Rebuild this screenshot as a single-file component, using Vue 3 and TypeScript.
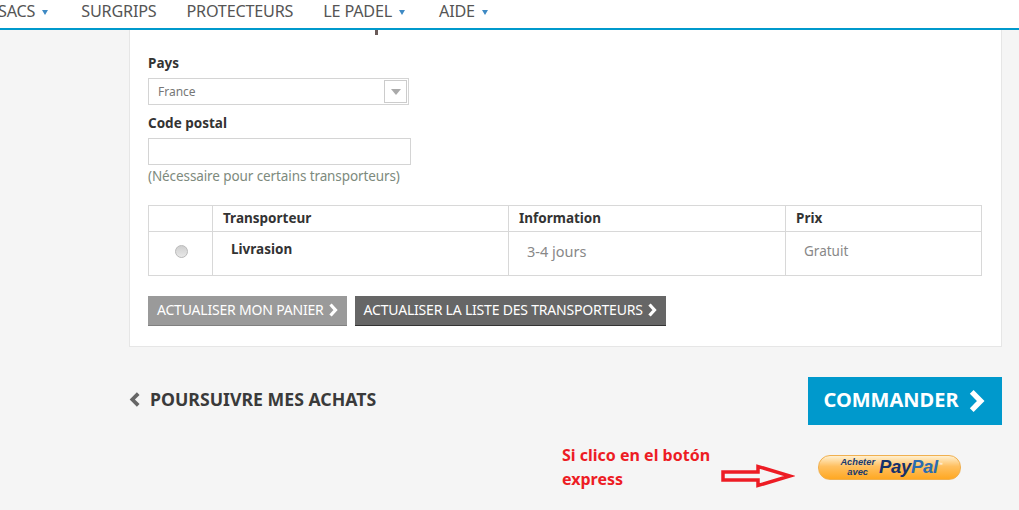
<script setup lang="ts">
const navItems: { label: string; caret: boolean }[] = [
  { label: 'SACS', caret: true },
  { label: 'SURGRIPS', caret: false },
  { label: 'PROTECTEURS', caret: false },
  { label: 'LE PADEL', caret: true },
  { label: 'AIDE', caret: true },
]
</script>

<template>
  <div class="page">
    <nav class="nav">
      <span v-for="item in navItems" :key="item.label" class="nav-item" :class="{ 'has-caret': item.caret }">
        {{ item.label }}<i v-if="item.caret" class="caret"></i>
      </span>
    </nav>

    <section class="card">
      <div class="stub"></div>
      <label class="label first">Pays</label>
      <div class="select">
        <span>France</span>
        <span class="select-btn"><i class="select-caret"></i></span>
      </div>
      <label class="label second">Code postal</label>
      <div class="input"></div>
      <p class="hint">(Nécessaire pour certains transporteurs)</p>

      <table class="table">
        <colgroup>
          <col class="c1" /><col class="c2" /><col class="c3" /><col class="c4" />
        </colgroup>
        <thead>
          <tr>
            <th></th>
            <th>Transporteur</th>
            <th>Information</th>
            <th>Prix</th>
          </tr>
        </thead>
        <tbody>
          <tr>
            <td class="radio-cell"><span class="radio"></span></td>
            <td class="name">Livrasion</td>
            <td class="muted days">3-4 jours</td>
            <td class="muted">Gratuit</td>
          </tr>
        </tbody>
      </table>

      <div class="buttons">
        <span class="btn light">ACTUALISER MON PANIER
          <svg class="chev" viewBox="0 0 9 14"><path d="M2 1.500 7 7l-5 5.500" /></svg>
        </span>
        <span class="btn dark">ACTUALISER LA LISTE DES TRANSPORTEURS
          <svg class="chev" viewBox="0 0 9 14"><path d="M2 1.500 7 7l-5 5.500" /></svg>
        </span>
      </div>
    </section>

    <div class="actions">
      <span class="back">
        <svg class="back-chev" viewBox="0 0 11 14"><path d="M8.500 1.500 3 7l5.500 5.500" /></svg>
        POURSUIVRE MES ACHATS
      </span>
      <span class="order">COMMANDER
        <svg class="order-chev" viewBox="0 0 16 22"><path d="M3.500 2.500 12 11l-8.500 8.500" /></svg>
      </span>
    </div>

    <div class="express">
      <p class="note">Si clico en el botón<br />express</p>
      <svg class="arrow" width="74" height="26" viewBox="0 0 74 26">
        <path d="M2 9h35V3.500L69 13 37 22.500V17H2z" fill="none" stroke="#ed1c24" stroke-width="3.500" />
      </svg>
      <div class="paypal">
        <span class="pp-small">Acheter<br />avec</span>
        <span class="pp-logo"><b class="pay">Pay</b><b class="pal">Pal</b><sup>™</sup></span>
      </div>
    </div>
  </div>
</template>

<style>
html, body { margin: 0; background: #f5f5f5; }
</style>

<style scoped>
.page {
  width: 1019px;
  height: 510px;
  overflow: hidden;
  background: #f5f5f5;
  font-family: "Noto Sans", "Open Sans", sans-serif;
  color: #333;
}
.nav {
  display: flex;
  box-sizing: border-box;
  height: 30px;
  padding-bottom: 7px;
  background: #fff;
  border-bottom: 2px solid #0099cc;
  align-items: center;
  margin-left: -2px;
  font-size: 16.200px;
  color: #555;
  letter-spacing: -0.2px;
}
.nav-item { white-space: nowrap; margin-right: 30px; }
.nav-item.has-caret { margin-right: 33px; }
.nav-item.has-caret:nth-child(4) { margin-right: 34px; }
.caret {
  display: inline-block;
  margin-left: 7px;
  vertical-align: 2px;
  border-left: 3.500px solid transparent;
  border-right: 3.500px solid transparent;
  border-top: 5px solid #3f8ac4;
}
.card {
  width: 873px;
  height: 317px;
  box-sizing: border-box;
  margin-left: 129px;
  padding: 0 19px 0 18px;
  background: #fff;
  border: 1px solid #e6e6e6;
  border-top: 0;
}
.stub { width: 3px; height: 5px; margin-left: 227px; background: #6a5a58; }
.label {
  display: block;
  font-size: 13.500px;
  font-weight: 700;
  line-height: 18px;
  color: #333;
}
.first { margin-top: 19px; }
.second { margin-top: 9px; }
.select {
  display: flex;
  justify-content: space-between;
  align-items: center;
  box-sizing: border-box;
  width: 261px;
  height: 27px;
  margin-top: 6px;
  padding: 1px 1px 1px 9px;
  border: 1px solid #d4d4d4;
  font-size: 12px;
  color: #777;
}
.select-btn {
  display: flex;
  align-items: center;
  justify-content: center;
  box-sizing: border-box;
  width: 23px;
  height: 23px;
  border: 1px solid #ccc;
}
.select-caret {
  border-left: 5px solid transparent;
  border-right: 5px solid transparent;
  border-top: 6px solid #aaa;
}
.input {
  box-sizing: border-box;
  width: 263px;
  height: 27px;
  margin-top: 6px;
  background: #fff;
  border: 1px solid #d4d4d4;
}
.hint {
  margin: 1px 0 0;
  font-size: 13.500px;
  line-height: 20px;
  color: #7d8a7d;
  letter-spacing: -0.1px;
}
.table {
  width: 834px;
  margin-top: 19px;
  border-collapse: collapse;
  table-layout: fixed;
}
.c1 { width: 64px; }
.c2 { width: 296px; }
.c3 { width: 277px; }
.table th, .table td { border: 1px solid #d8d8d8; padding: 0; box-sizing: border-box; }
.table th {
  height: 26px;
  padding: 0 0 2px 10px;
  font-size: 13.500px;
  font-weight: 700;
  text-align: left;
  color: #333;
}
.table td { height: 44px; font-size: 13.500px; }
.radio {
  display: block;
  box-sizing: border-box;
  width: 13px;
  height: 13px;
  margin: 0 0 5px 26px;
  border: 1px solid #bbb;
  border-radius: 50%;
  background: linear-gradient(#cfcfcf, #e8e8e8);
}
.table .name {
  padding: 0 0 9px 18px;
  font-weight: 700;
  color: #333;
}
.table .muted { padding: 0 0 5px 18px; color: #888; }
.table .days { font-size: 14.500px; }
.buttons { display: flex; gap: 8px; margin-top: 20px; }
.btn {
  display: flex;
  align-items: center;
  gap: 4px;
  box-sizing: border-box;
  height: 30px;
  padding: 0 9px 2px;
  font-size: 14px;
  letter-spacing: -0.2px;
  color: #fff;
  white-space: nowrap;
}
.light { background: #9a9a9a; border-bottom: 1px solid #808080; }
.dark { background: #666; border-bottom: 1px solid #333; }
.chev { width: 10px; height: 14px; }
.chev path { fill: none; stroke: #fff; stroke-width: 3.200; }
.actions {
  display: flex;
  justify-content: space-between;
  align-items: center;
  width: 873px;
  height: 48px;
  margin: 30px 0 0 129px;
}
.back {
  display: flex;
  align-items: center;
  gap: 9px;
  padding-bottom: 4px;
  font-size: 17.700px;
  font-weight: 700;
  color: #3a3a3a;
}
.back-chev { width: 12px; height: 15px; margin-top: 1px; }
.back-chev path { fill: none; stroke: #666; stroke-width: 3.500; }
.order {
  display: flex;
  align-items: center;
  justify-content: center;
  gap: 9px;
  box-sizing: border-box;
  width: 194px;
  height: 48px;
  padding: 0 2px 4px 0;
  background: #0099cc;
  color: #fff;
  font-size: 20px;
  font-weight: 700;
}
.order-chev { width: 17px; height: 24px; margin-top: 4px; }
.order-chev path { fill: none; stroke: #fff; stroke-width: 5; }
.express {
  display: flex;
  align-items: flex-start;
  margin: 18px 0 0 562px;
}
.note {
  width: 159px;
  margin: 0;
  font-size: 16px;
  font-weight: 700;
  line-height: 24px;
  color: #ed1c24;
}
.arrow { margin-top: 20px; }
.paypal {
  display: flex;
  align-items: center;
  justify-content: center;
  gap: 4px;
  box-sizing: border-box;
  width: 143px;
  height: 25px;
  margin: 12px 0 0 23px;
  padding-left: 4px;
  border: 1px solid #f0b050;
  border-radius: 12px;
  background: linear-gradient(#fff0d0, #ffc060 45%, #ffa822);
  font-family: "Liberation Sans", Arial, sans-serif;
  font-style: italic;
}
.pp-small {
  font-size: 9.300px;
  font-weight: 700;
  line-height: 9.500px;
  text-align: center;
  color: #1a3a6e;
}
.pp-logo { font-size: 18.500px; line-height: 1; letter-spacing: -0.3px; }
.pay { color: #14306b; }
.pal { color: #2a6cb0; }
.pp-logo sup { font-size: 5px; color: #fff; }
</style>
